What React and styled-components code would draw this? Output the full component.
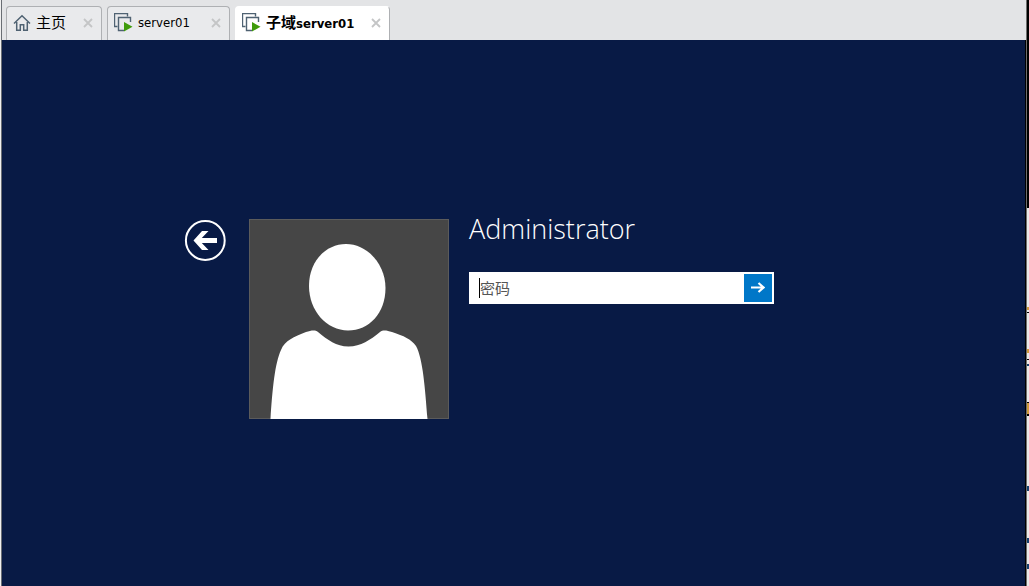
import React from "react";
import styled, { createGlobalStyle } from "styled-components";

const GlobalStyle = createGlobalStyle`
  *, *::before, *::after { box-sizing: border-box; }
  html, body, #root { height: 100%; margin: 0; }
  body { background: #f0f0f0; overflow: hidden; }
  button, input { font: inherit; margin: 0; padding: 0; border: 0; border-radius: 0; }
`;

const Desktop = styled.div`
  display: flex;
  min-height: 100vh;
  font-family: "DejaVu Sans Condensed", "Noto Sans CJK SC", sans-serif;
`;

const Window = styled.div`
  flex: 1;
  display: flex;
  flex-direction: column;
  border-left: 1px solid #6a6e74;
  border-right: 1px solid #6e6e6e;
  margin-left: 1px;
`;

const TabBar = styled.nav`
  display: flex;
  align-items: flex-end;
  gap: 5px;
  height: 40px;
  padding-left: 4px;
  background: #e3e4e6;
`;

const Tab = styled.div`
  display: flex;
  align-items: center;
  width: ${(p) => p.$width}px;
  height: 34px;
  padding: 0 8px 2px 6px;
  border: 1px solid ${(p) => (p.$active ? "#ffffff" : "#aeb0b3")};
  border-right-color: #aeb0b3;
  border-bottom: 0;
  border-radius: 4px 4px 0 0;
  background: ${(p) => (p.$active ? "#ffffff" : "#e9eaec")};
`;

const TabTitle = styled.button`
  flex: 1;
  display: flex;
  align-items: center;
  gap: 5px;
  background: none;
  color: #000;
  font-size: 13px;
  line-height: 20px;
  font-weight: ${(p) => (p.$active ? 700 : 400)};
  white-space: nowrap;
`;

const Chinese = styled.span`
  font-family: "Noto Sans CJK SC", sans-serif;
  font-size: 15px;
  font-weight: ${(p) => (p.$active ? 700 : 400)};
`;

const CloseButton = styled.button`
  display: flex;
  background: none;
`;

const Screen = styled.main`
  flex: 1;
  display: flex;
  align-items: flex-start;
  padding: 171px 24px 24px 182px;
  border-right: 1px solid #000;
  background: #081a45;
`;

const BackButton = styled.button`
  display: flex;
  margin: 8px 23px 0 0;
  background: none;
`;

const Portrait = styled.div`
  display: flex;
  width: 200px;
  height: 200px;
  margin-top: 8px;
  border: 1px solid #5b5b5b;
  background: #464646;
`;

const Login = styled.form`
  margin-left: 20px;
`;

const UserName = styled.h1`
  margin: 0 0 25px;
  color: #fff;
  font-family: "Open Sans", sans-serif;
  font-size: 27px;
  line-height: 36px;
  font-weight: 300;
`;

const PasswordBox = styled.div`
  display: flex;
  width: 305px;
  height: 32px;
  border: 2px solid #fff;
  background: #fff;
`;

const Caret = styled.span`
  width: 1px;
  height: 20px;
  margin: 4px 0 0 8px;
  background: #000;
`;

const PasswordInput = styled.input`
  flex: 1;
  min-width: 0;
  padding-bottom: 2px;
  background: #fff;
  font-family: "Noto Sans CJK SC", sans-serif;
  font-size: 15px;
  outline: 0;
  &::placeholder { color: #555; opacity: 1; }
`;

const SubmitButton = styled.button`
  display: flex;
  align-items: center;
  justify-content: center;
  width: 28px;
  background: #0077c8;
`;

const Behind = styled.aside`
  width: 2px;
  background: #e8e8e8;
`;

const BehindDark = styled.div`
  height: 208px;
  background: #000;
`;

const Marks = styled.svg`
  display: block;
`;

const HomeIcon = () => (
  <svg width="18" height="18" viewBox="0 0 18 18" fill="none" stroke="#4f6272" strokeWidth="1.5">
    <path d="M1 9.5 9 1.800l8 7.700" />
    <path d="M3.700 8v8.300h3.600v-5.500h3.400v5.500h3.600V8" />
  </svg>
);

const MachineIcon = () => (
  <svg width="19" height="19" viewBox="0 0 19 19" fill="none">
    <path d="M3.500 13.500h-3v-13h13v3" stroke="#4f6272" strokeWidth="1.400" />
    <path d="M10 17.500H4.500v-13h12V9" stroke="#4f6272" strokeWidth="1.400" />
    <path d="M10 9v9.500l8.500-4.700Z" fill="#3f9b0b" />
  </svg>
);

const CloseIcon = () => (
  <svg width="10" height="10" viewBox="0 0 10 10" stroke="#c4c5c6" strokeWidth="1.800">
    <path d="m1 1 8 8M9 1 1 9" />
  </svg>
);

const tabs = [
  { id: "home", width: 96, icon: <HomeIcon />, chinese: "主页", latin: "" },
  { id: "server", width: 123, icon: <MachineIcon />, chinese: "", latin: "server01" },
  { id: "child", width: 155, icon: <MachineIcon />, chinese: "子域", latin: "server01", active: true },
];

export default function App() {
  return (
    <>
      <GlobalStyle />
      <Desktop>
        <Window>
          <TabBar>
            {tabs.map((t) => (
              <Tab key={t.id} $width={t.width} $active={t.active}>
                <TabTitle type="button" $active={t.active}>
                  {t.icon}
                  <span>
                    {t.chinese && <Chinese $active={t.active}>{t.chinese}</Chinese>}
                    {t.latin}
                  </span>
                </TabTitle>
                <CloseButton type="button" aria-label="关闭">
                  <CloseIcon />
                </CloseButton>
              </Tab>
            ))}
          </TabBar>
          <Screen>
            <BackButton type="button" aria-label="返回">
              <svg width="42" height="42" viewBox="0 0 42 42">
                <circle cx="21.300" cy="21.500" r="19.400" fill="none" stroke="#fff" strokeWidth="2" />
                <path d="M9.500 21.500 18 12h6.500l-6.700 7H33v5H17.800l6.700 7H18Z" fill="#fff" />
              </svg>
            </BackButton>
            <Portrait>
              <svg width="198" height="199" viewBox="0 0 198 199" fill="#fff" aria-hidden="true">
                <path d="M96 24C117 24 135.500 44 135.500 68C135.500 93 119 110.500 98 110.500C77 110.500 59 91 59 66C59 41 76 24 96 24Z" />
                <path d="M20.500 199C22.500 168 25 143 31 130C35 120 44 117 56 112C61 110.500 65 109.500 68 112C78 120 86 126.500 98.500 126.500C111 126.500 120 120 130 112C133 109.500 137 110.500 142 112C154 116 161 119 166 126C173 139 175 168 177.500 199Z" />
              </svg>
            </Portrait>
            <Login onSubmit={(e) => e.preventDefault()}>
              <UserName>Administrator</UserName>
              <PasswordBox>
                <Caret />
                <PasswordInput type="password" placeholder="密码" aria-label="密码" />
                <SubmitButton type="submit" aria-label="提交">
                  <svg width="14" height="12" viewBox="0 0 14 12" fill="none" stroke="#fff" strokeWidth="2.200">
                    <path d="M0 5.500h12.500M7.500 1 12.500 5.500l-5 4.500" />
                  </svg>
                </SubmitButton>
              </PasswordBox>
            </Login>
          </Screen>
        </Window>
        <Behind>
          <BehindDark />
          <Marks width="2" height="378" viewBox="0 0 2 378">
            <path d="M0 99h2v3H0ZM0 141h2v4H0ZM0 195h2v11H0Z" fill="#d09a3c" />
            <path d="M0 104h2v1H0ZM0 151h2v1H0ZM0 194h2v1H0ZM0 206h2v2H0Z" fill="#000" />
            <path d="M0 156h2v2H0ZM0 278h2v5H0ZM0 330h2v5H0ZM0 356h2v5H0Z" fill="#14406e" />
          </Marks>
        </Behind>
      </Desktop>
    </>
  );
}
